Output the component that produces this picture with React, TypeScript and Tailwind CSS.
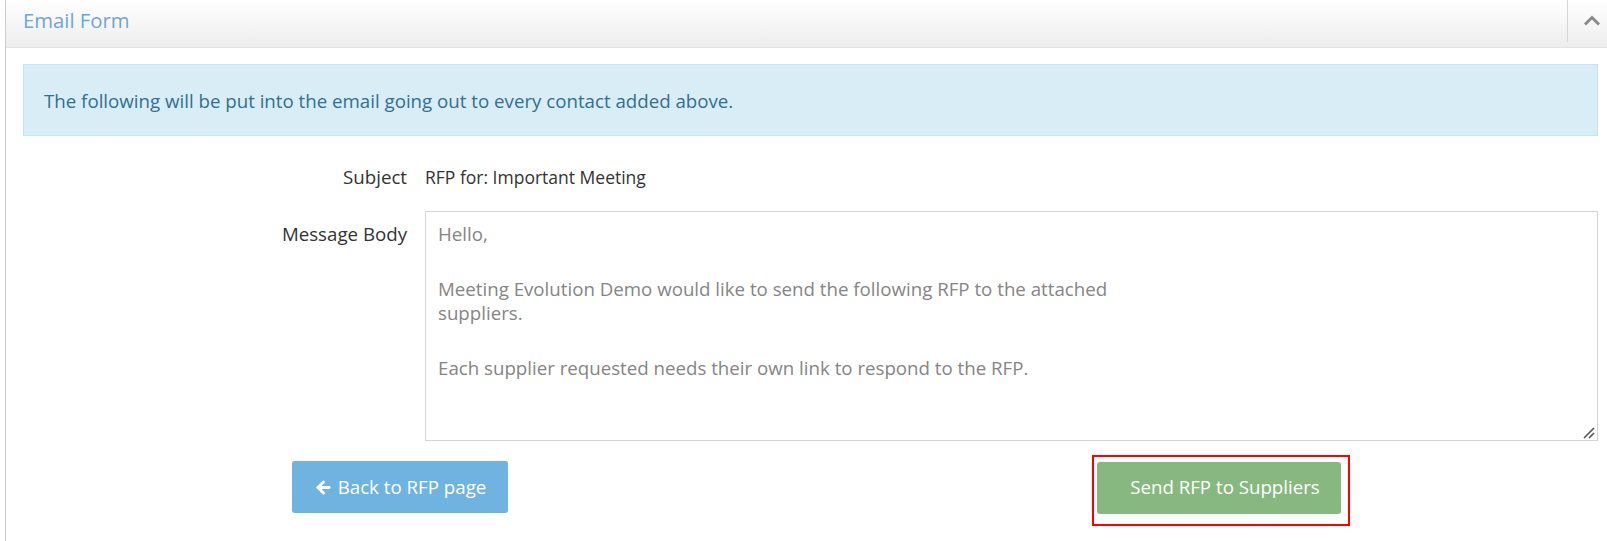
import React from "react";
import { ArrowLeft } from "lucide-react";

export default function App() {
  return (
    <div
      className="w-[1607px] h-[541px] bg-white overflow-hidden"
      style={{ fontFamily: '"Open Sans", "Liberation Sans", sans-serif' }}
    >
      <div className="ml-[5px] w-[1640px] h-full border-l border-[#cccccc] flex flex-col">
        {/* Header */}
        <div className="h-[48px] shrink-0 flex items-stretch bg-gradient-to-b from-[#ffffff] to-[#ededed] border-b border-[#e3e3e3]">
          <div className="w-[1561px] flex items-center pl-[17px] text-[20.3px] text-[#6ea7d4] pb-[7px]">
            Email Form
          </div>
          <div className="w-[1px] bg-[#d6d6d6] mb-[5px]" />
          <div className="flex-1 flex items-center pl-[15px] pb-[7px]">
            <svg width="18" height="11" viewBox="0 0 18 11">
              <path d="M2 9.5 L9 2.5 L16 9.5" stroke="#8a8a8a" strokeWidth="3" fill="none" strokeLinejoin="miter" />
            </svg>
          </div>
        </div>

        {/* Body */}
        <div className="pl-[17px] w-[1592px] pt-[16px]">
          <div className="h-[72px] bg-[#d9edf7] border border-[#bce8f1] flex items-center pl-[20px] pt-[3px] text-[18.7px] text-[#31708f]">
            The following will be put into the email going out to every contact added above.
          </div>

          <div className="flex items-center mt-[28px] h-[26px] text-[#333333]">
            <div className="w-[384px] text-right text-[18.7px]">Subject</div>
            <div className="ml-[18px] text-[17.5px]">RFP for: Important Meeting</div>
          </div>

          <div className="flex items-start mt-[21px]">
            <div className="w-[384px] text-right text-[18.7px] text-[#333333] pt-[10px] leading-[26px]">
              Message Body
            </div>
            <div className="ml-[18px] flex-1 relative h-[230px] border border-[#d5d5d5] pl-[12px] pt-[10px] text-[18.7px] text-[#858585] leading-[23.6px]">
              <div>Hello,</div>
              <div className="mt-[31.7px]">
                Meeting Evolution Demo would like to send the following RFP to the attached
                <br />
                suppliers.
              </div>
              <div className="mt-[31.7px]">
                Each supplier requested needs their own link to respond to the RFP.
              </div>
              <svg className="absolute right-[2px] bottom-[1px]" width="12" height="12" viewBox="0 0 12 12">
                <path d="M1 11 L11 1 M6 11 L11 6" stroke="#555" strokeWidth="1.6" />
              </svg>
            </div>
          </div>

          <div className="flex items-start mt-[14px]">
            <button className="mt-[6px] ml-[269px] w-[216px] h-[52px] rounded-[3px] bg-[#6fb3e0] text-white text-[18.7px] flex items-center justify-center gap-[5px]">
              <ArrowLeft size={19} strokeWidth={3.6} />
              <span>Back to RFP page</span>
            </button>
            <div className="ml-[584px] border-[2.5px] border-[#ff0000] pl-[3px] pt-[4.5px] pr-[7px] pb-[10.5px]">
              <button className="w-[244px] h-[52px] rounded-[3px] bg-[#87b87f] text-white text-[18.7px] flex items-center justify-center pl-[12px]">
                Send RFP to Suppliers
              </button>
            </div>
          </div>
        </div>
      </div>
    </div>
  );
}
